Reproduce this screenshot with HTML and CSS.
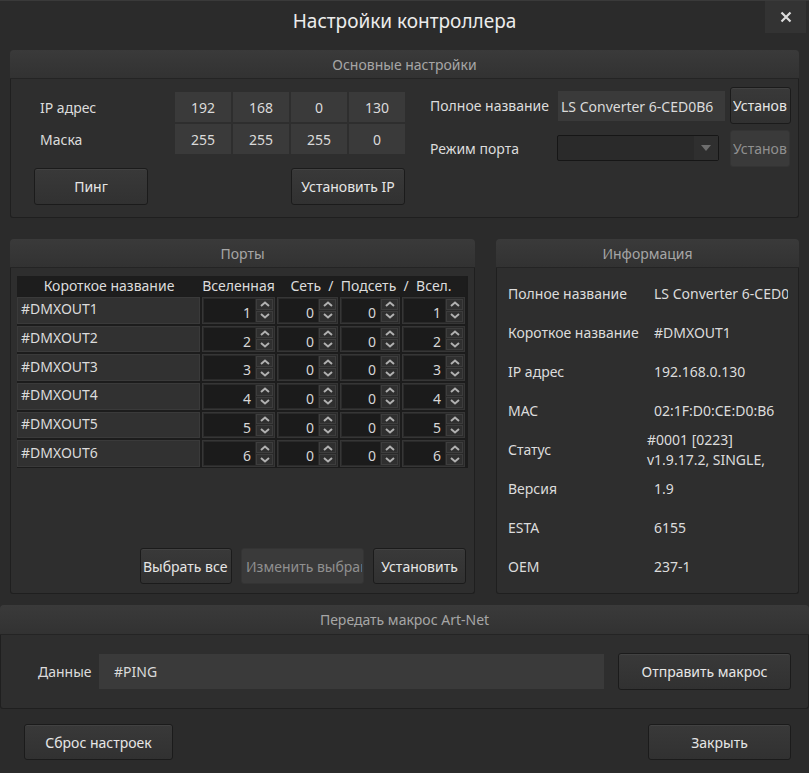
FILE: index.html
```html
<!DOCTYPE html>
<html lang="ru">
<head>
    <meta charset="UTF-8">
    <title>Настройки контроллера</title>
    <link rel="stylesheet" href="styles.css">
</head>
<body>
<div class="window">
    <div class="titlebar">
        <div class="title">Настройки контроллера</div>
        <div class="close">
            <svg width="12" height="12" viewBox="0 0 12 12"><path d="M1.5 1.5 L10.5 10.5 M10.5 1.5 L1.5 10.5" stroke="#dcdcdc" stroke-width="2.2"/></svg>
        </div>
    </div>

    <!-- основные настройки -->
    <section class="group main">
        <div class="group-head">Основные настройки</div>
        <div class="group-body main-body">
            <div class="ip-grid">
                <div class="lbl">IP адрес</div>
                <div class="field">192</div>
                <div class="field">168</div>
                <div class="field">0</div>
                <div class="field">130</div>
                <div class="lbl">Маска</div>
                <div class="field">255</div>
                <div class="field">255</div>
                <div class="field">255</div>
                <div class="field">0</div>
                <div class="btn btn-ping">Пинг</div>
                <div class="btn btn-setip">Установить IP</div>
            </div>
            <div class="name-block">
                <div class="name-row">
                    <div class="name-lbl">Полное название</div>
                    <div class="field name-field">LS Converter 6-CED0B6</div>
                    <div class="btn btn-small"><span class="clip">Установ</span></div>
                </div>
                <div class="name-row row-mode">
                    <div class="name-lbl">Режим порта</div>
                    <div class="combo">
                        <span class="combo-arrow">
                            <svg width="10" height="6" viewBox="0 0 10 6"><path d="M0 0 H10 L5 6 Z" fill="#6e6e6e"/></svg>
                        </span>
                    </div>
                    <div class="btn btn-small disabled"><span class="clip">Установ</span></div>
                </div>
            </div>
        </div>
    </section>

    <div class="middle">
        <!-- порты -->
        <section class="group ports">
            <div class="group-head">Порты</div>
            <div class="group-body ports-body">
                <div class="ports-table" id="portsTable">
                    <div class="th">Короткое название</div>
                    <div class="th">Вселенная</div>
                    <div class="th th-wide">Сеть&nbsp; / &nbsp;Подсеть&nbsp; / &nbsp;Всел.</div>
                </div>
                <div class="ports-buttons">
                    <div class="btn btn-sel">Выбрать все</div>
                    <div class="btn btn-change disabled"><span class="clip">Изменить выбранные</span></div>
                    <div class="btn btn-apply">Установить</div>
                </div>
            </div>
        </section>

        <!-- информация -->
        <section class="group info">
            <div class="group-head">Информация</div>
            <div class="group-body info-body">
                <div class="info-lbl">Полное название</div>
                <div class="info-val"><span class="clip">LS Converter 6-CED0B6</span></div>
                <div class="info-lbl">Короткое название</div>
                <div class="info-val">#DMXOUT1</div>
                <div class="info-lbl">IP адрес</div>
                <div class="info-val">192.168.0.130</div>
                <div class="info-lbl">MAC</div>
                <div class="info-val">02:1F:D0:CE:D0:B6</div>
                <div class="info-lbl">Статус</div>
                <div class="info-val status">#0001 [0223]<br>v1.9.17.2, SINGLE,</div>
                <div class="info-lbl">Версия</div>
                <div class="info-val">1.9</div>
                <div class="info-lbl">ESTA</div>
                <div class="info-val">6155</div>
                <div class="info-lbl">OEM</div>
                <div class="info-val">237-1</div>
            </div>
        </section>
    </div>

    <!-- макрос -->
    <section class="group macro">
        <div class="group-head">Передать макрос Art-Net</div>
        <div class="group-body macro-body">
            <div class="macro-lbl">Данные</div>
            <div class="field macro-field">#PING</div>
            <div class="btn btn-send">Отправить макрос</div>
        </div>
    </section>

    <div class="footer">
        <div class="btn btn-reset">Сброс настроек</div>
        <div class="btn btn-close">Закрыть</div>
    </div>
</div>

<script>
    // порты: короткое название, вселенная, сеть, подсеть, всел.
    const ports = [
        { name: '#DMXOUT1', univ: 1, net: 0, sub: 0, uni: 1 },
        { name: '#DMXOUT2', univ: 2, net: 0, sub: 0, uni: 2 },
        { name: '#DMXOUT3', univ: 3, net: 0, sub: 0, uni: 3 },
        { name: '#DMXOUT4', univ: 4, net: 0, sub: 0, uni: 4 },
        { name: '#DMXOUT5', univ: 5, net: 0, sub: 0, uni: 5 },
        { name: '#DMXOUT6', univ: 6, net: 0, sub: 0, uni: 6 },
    ];

    const arrows = '<div class="spin-btns">' +
        '<div class="spin-btn"><svg width="10" height="6" viewBox="0 0 10 6"><path d="M1 5 L5 1.5 L9 5" fill="none" stroke="#b0b0b0" stroke-width="2"/></svg></div>' +
        '<div class="spin-btn"><svg width="10" height="6" viewBox="0 0 10 6"><path d="M1 1 L5 4.5 L9 1" fill="none" stroke="#b0b0b0" stroke-width="2"/></svg></div>' +
        '</div>';

    function spin(value) {
        return '<div class="spin"><div class="spin-val">' + value + '</div>' + arrows + '</div>';
    }

    const table = document.getElementById('portsTable');
    ports.forEach(p => {
        table.insertAdjacentHTML('beforeend',
            '<div class="td-name">' + p.name + '</div>' +
            spin(p.univ) + spin(p.net) + spin(p.sub) + spin(p.uni));
    });
</script>
</body>
</html>
```

FILE: styles.css
```css
* {
    box-sizing: border-box;
}

body {
    margin: 0;
    background-color: #2b2b2b;
    font-family: "Noto Sans", "Open Sans", sans-serif;
    font-size: 14px;
    color: #dcdcdc;
}

.window {
    width: 809px;
    height: 773px;
    position: relative;
    display: flex;
    flex-direction: column;
    background-color: #2b2b2b;
    border-top: 1px solid #3a3a3a;
}

.titlebar {
    height: 49px;
    display: flex;
    justify-content: center;
    padding-top: 7px;
}

.title {
    font-size: 19px;
    color: #ececec;
}

.close {
    position: absolute;
    top: 0;
    right: 3px;
    width: 41px;
    height: 32px;
    background-color: #333;
    display: flex;
    align-items: center;
    justify-content: center;
}

/* группы */
.group {
    display: flex;
    flex-direction: column;
}

.group-head {
    height: 29px;
    line-height: 29px;
    text-align: center;
    color: #a6a6a6;
    background: linear-gradient(#3a3a3a, #323232);
    border-radius: 4px 4px 0 0;
    border-bottom: 1px solid #242424;
}

.group-body {
    background-color: #2e2e2e;
    border: 1px solid #1f1f1f;
    border-top: none;
    border-radius: 0 0 3px 3px;
}

.field {
    background-color: #3a3a3a;
    color: #dadada;
    display: flex;
    align-items: center;
    justify-content: center;
}

.btn {
    display: flex;
    align-items: center;
    justify-content: center;
    height: 37px;
    background: linear-gradient(#393939, #313131);
    border: 1px solid #1b1b1b;
    border-radius: 3px;
    box-shadow: inset 0 1px 0 #424242;
    color: #e6e6e6;
    white-space: nowrap;
    overflow: hidden;
}

.btn.disabled {
    background: #3a3a3a;
    border-color: #343434;
    box-shadow: none;
    color: #909090;
}

.clip {
    display: block;
    overflow: hidden;
    white-space: nowrap;
}

/* основные настройки */
.main {
    margin: 0 10px;
}

.main-body {
    height: 139px;
    display: flex;
    gap: 25px;
    padding: 8px 9px 0 23px;
}

.ip-grid {
    margin-top: 5px;
    display: grid;
    grid-template-columns: 139px repeat(4, 56px);
    grid-template-rows: 30px 30px 37px;
    column-gap: 2px;
    row-gap: 2px;
}

.lbl {
    display: flex;
    align-items: center;
    padding-left: 6px;
}

.btn-ping {
    width: 114px;
    margin-top: 12px;
}

.btn-setip {
    grid-column: 4 / 6;
    margin-top: 12px;
}

.name-block {
    display: flex;
    flex-direction: column;
    gap: 6px;
}

.name-row {
    height: 37px;
    display: flex;
    align-items: center;
}

.row-mode {
    height: 36px;
}

.name-lbl {
    width: 128px;
    white-space: nowrap;
}

.name-field {
    width: 167px;
    height: 30px;
    justify-content: flex-start;
    padding-left: 3px;
    margin-top: 1px;
    margin-right: 5px;
}

.btn-small {
    width: 61px;
    justify-content: flex-start;
    padding-left: 2px;
}

.btn-small .clip {
    width: 56px;
}

.row-mode .btn-small {
    margin-left: 11px;
    width: 60px;
}

.combo {
    width: 162px;
    height: 26px;
    margin-left: -1px;
    background-color: #2a2a2a;
    border: 1px solid #161616;
    border-radius: 2px;
    display: flex;
    justify-content: flex-end;
}

.combo-arrow {
    width: 24px;
    background-color: #2f2f2f;
    display: flex;
    align-items: center;
    justify-content: center;
}

/* порты и информация */
.middle {
    margin-top: 21px;
    padding: 0 10px;
    display: flex;
    gap: 21px;
    height: 355px;
}

.ports {
    width: 465px;
}

.info {
    width: 303px;
}

.ports-body,
.info-body {
    flex: 1;
}

.ports-body {
    display: flex;
    flex-direction: column;
    padding: 8px 8px 9px 6px;
}

.ports-table {
    width: 451px;
    display: grid;
    grid-template-columns: 184px 75px 63px 62px 65px;
    grid-template-rows: 20px repeat(6, 28.67px);
    background-color: #1c1c1c;
}

.th {
    text-align: center;
    line-height: 20px;
    color: #dcdcdc;
    background-color: #1d1d1d;
    white-space: nowrap;
}

.th-wide {
    grid-column: 3 / 6;
}

.td-name {
    margin: 1px 1px 1px 0;
    background-color: #313131;
    border: 1px solid #3a3a3a;
    padding: 0 0 3px 3px;
    display: flex;
    align-items: center;
}

.spin {
    margin: 1px;
    padding: 1px;
    display: flex;
    background-color: #2a2a2a;
    border: 1px solid #363636;
}

.spin-val {
    flex: 1;
    background-color: #1b1b1b;
    color: #d6d6d6;
    text-align: right;
    padding: 4px 4px 0 0;
}

.spin-btns {
    width: 17px;
    display: flex;
    flex-direction: column;
    gap: 1px;
    margin-left: 1px;
}

.spin-btn {
    flex: 1;
    background-color: #2f2f2f;
    border: 1px solid #3d3d3d;
    display: flex;
    align-items: center;
    justify-content: center;
}

.ports-buttons {
    margin-top: auto;
    display: flex;
    justify-content: flex-end;
    gap: 9px;
}

.ports-buttons .btn {
    height: 36px;
}

.btn-sel {
    width: 92px;
    justify-content: flex-start;
    padding-left: 2px;
}

.btn-change {
    width: 123px;
    justify-content: flex-start;
    padding-left: 4px;
}

.btn-change .clip {
    width: 116px;
}

.btn-apply {
    width: 93px;
}

.info-body {
    display: grid;
    grid-template-columns: 146px 134px;
    grid-auto-rows: 39px;
    align-items: center;
    padding: 6px 11px;
}

.info-lbl {
    white-space: nowrap;
}

.info-val {
    white-space: nowrap;
    overflow: hidden;
}

.info-val .clip {
    width: 134px;
}

.info-val.status {
    margin-left: -7px;
    line-height: 20px;
    overflow: visible;
}

/* макрос */
.macro {
    margin-top: 11px;
}

.macro .group-head {
    height: 30px;
    line-height: 30px;
}

.macro-body {
    height: 74px;
    display: flex;
    align-items: center;
    padding-left: 37px;
    border-left: 1px solid #1f1f1f;
}

.macro-lbl {
    width: 61px;
}

.macro-field {
    width: 505px;
    height: 35px;
    justify-content: flex-start;
    padding-left: 15px;
    margin-right: 14px;
}

.btn-send {
    width: 173px;
}

.footer {
    margin-top: 15px;
    padding: 0 18px 0 24px;
    display: flex;
    justify-content: space-between;
}

.footer .btn {
    height: 36px;
}

.btn-reset {
    width: 149px;
}

.btn-close {
    width: 143px;
}
```
